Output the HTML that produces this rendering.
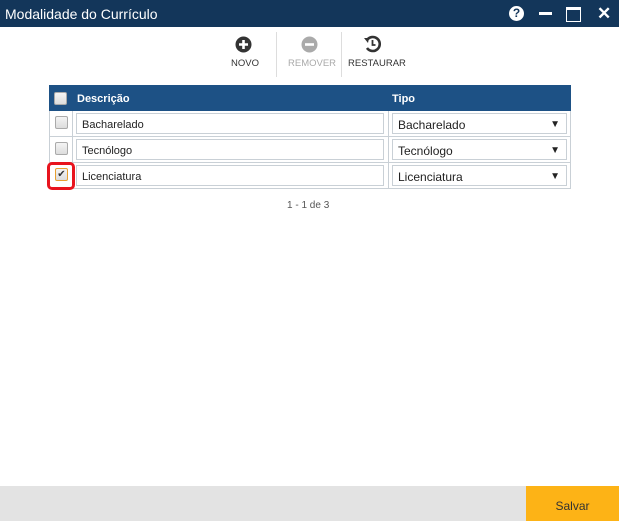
<html><head><style>
body{margin:0;width:619px;height:521px;position:relative;background:#fff;font-family:"Liberation Sans",sans-serif;overflow:hidden}
.t{position:absolute;left:0;top:0;width:619px;height:27px;background:#13365a;color:#fff;font-size:14px;line-height:28px}
.abs{position:absolute}
.lbl{position:absolute;top:58px;font-size:9.5px;color:#333}
.sep{position:absolute;top:32px;width:1px;height:45px;background:#ddd}
.hdr{position:absolute;left:49px;top:85px;width:522px;height:26px;background:#1d5185;color:#fff;font-size:11px;font-weight:bold}
.row{position:absolute;left:49px;width:520px;height:25px;border:1px solid #c9d0d6;border-top:none}
.cb{position:absolute;width:11px;height:11px;border:1px solid #aaa;border-radius:2px;background:linear-gradient(#f4f4f4,#ddd)}
.in{position:absolute;top:2px;height:21px;border:1px solid #c9d0d6;font-size:11px;line-height:22px;padding-left:5px;box-sizing:border-box;color:#222}
</style></head><body>
<div class="t"><span style="position:absolute;left:5px">Modalidade do Currículo</span>
<span class="abs" style="left:509px;top:6px;width:15px;height:15px;border-radius:50%;background:#fff;color:#13365a;font-size:12px;font-weight:bold;line-height:15px;text-align:center">?</span>
<span class="abs" style="left:539px;top:12px;width:13px;height:3px;background:#fff"></span>
<span class="abs" style="left:566px;top:7px;width:13px;height:11px;border:1.5px solid #fff;border-top-width:3px"></span>
<span class="abs" style="left:597px;top:0;font-size:17px;font-weight:bold">✕</span></div>
<svg class="abs" style="left:235px;top:36px" width="17" height="17"><circle cx="8.5" cy="8.5" r="8" fill="#333"/><path d="M8.5 4v9M4 8.5h9" stroke="#fff" stroke-width="2.6"/></svg>
<div class="lbl" style="left:231px">NOVO</div>
<div class="sep" style="left:276px"></div>
<svg class="abs" style="left:301px;top:36px" width="17" height="17"><circle cx="8.5" cy="8.5" r="8" fill="#aaa"/><path d="M4 8.5h9" stroke="#fff" stroke-width="2.6"/></svg>
<div class="lbl" style="left:288px;color:#aaa">REMOVER</div>
<div class="sep" style="left:341px"></div>
<svg class="abs" style="left:363px;top:35px" width="18" height="18"><path d="M4 5A7 7 0 1 1 4 13" fill="none" stroke="#333" stroke-width="2.6"/><path d="M1 3l5 0 -1 5z" fill="#333"/><path d="M9.5 5v5h3" stroke="#333" stroke-width="1.8" fill="none"/></svg>
<div class="lbl" style="left:348px">RESTAURAR</div>
<div class="hdr"><div class="cb" style="left:5px;top:7px"></div><span class="abs" style="left:28px;top:8px">Descrição</span><span class="abs" style="left:343px;top:8px">Tipo</span></div>
<div class="row" style="top:111px"><div class="cb" style="left:5px;top:5px"></div><div class="abs" style="left:22px;top:0;width:1px;height:25px;background:#c9d0d6"></div><div class="in" style="left:26px;width:308px">Bacharelado</div><div class="abs" style="left:338px;top:0;width:1px;height:25px;background:#c9d0d6"></div><div class="in" style="left:342px;width:175px;font-size:12px">Bacharelado<span style="position:absolute;right:6px;font-size:10px">▼</span></div></div>
<div class="row" style="top:137px"><div class="cb" style="left:5px;top:5px"></div><div class="abs" style="left:22px;top:0;width:1px;height:25px;background:#c9d0d6"></div><div class="in" style="left:26px;width:308px">Tecnólogo</div><div class="abs" style="left:338px;top:0;width:1px;height:25px;background:#c9d0d6"></div><div class="in" style="left:342px;width:175px;font-size:12px">Tecnólogo<span style="position:absolute;right:6px;font-size:10px">▼</span></div></div>
<div class="row" style="top:163px"><div class="cb" style="left:5px;top:5px;border-color:#e8a030;font-size:10px;line-height:11px;text-align:center;color:#333">✔</div><div class="abs" style="left:22px;top:0;width:1px;height:25px;background:#c9d0d6"></div><div class="in" style="left:26px;width:308px">Licenciatura</div><div class="abs" style="left:338px;top:0;width:1px;height:25px;background:#c9d0d6"></div><div class="in" style="left:342px;width:175px;font-size:12px">Licenciatura<span style="position:absolute;right:6px;font-size:10px">▼</span></div></div>
<div class="abs" style="left:47px;top:162px;border:3px solid #e8141e;border-radius:5px;box-sizing:border-box;width:28px;height:28px"></div>
<div class="abs" style="left:287px;top:200px;font-size:10px;color:#555">1 - 1 de 3</div>
<div class="abs" style="left:0;top:486px;width:526px;height:35px;background:#e3e3e3"></div>
<div class="abs" style="left:526px;top:486px;width:93px;height:35px;background:#fdb316;color:#333;font-size:12px;line-height:40px;text-align:center">Salvar</div>
</body></html>
